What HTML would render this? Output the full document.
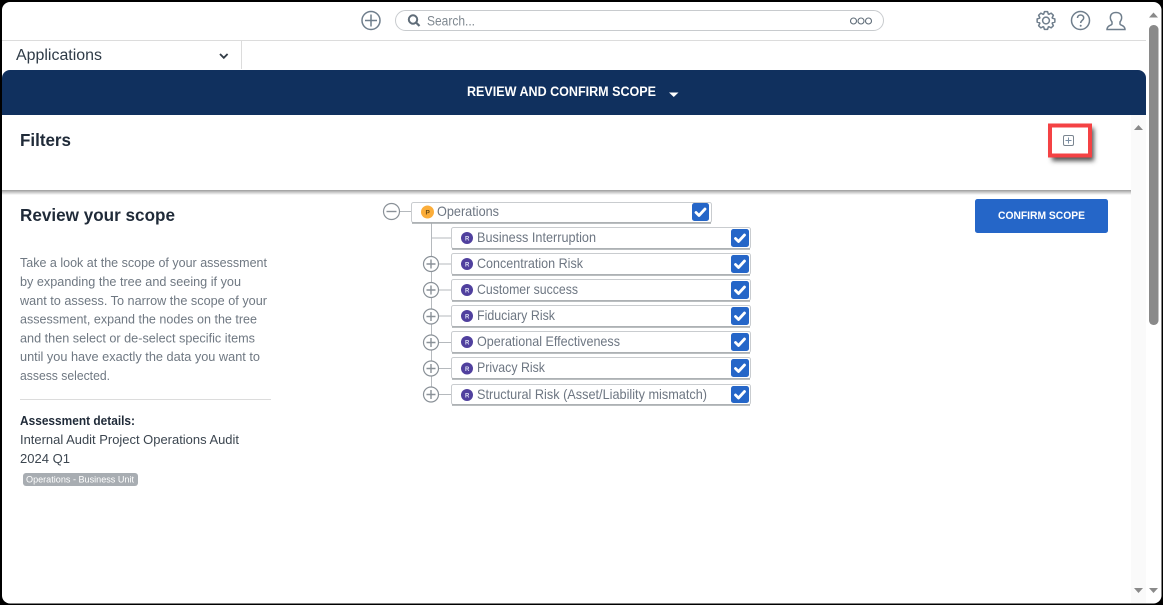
<!DOCTYPE html>
<html lang="en">
<head>
<meta charset="utf-8">
<title>Review and Confirm Scope</title>
<style>
html,body{margin:0;padding:0;background:#000;width:1163px;height:605px;overflow:hidden}
svg{display:block}
text{font-family:"Liberation Sans",sans-serif}
.p{font-size:12.5px;fill:#6f7882}
.n{font-size:14px;fill:#6d7682}
.d{font-size:12.5px;fill:#3c4650}
.ck{fill:none;stroke:#fff;stroke-width:2.8;stroke-linecap:round;stroke-linejoin:round}
.l{stroke:#b5b9bd;stroke-width:1;fill:none}
.c{fill:#fff;stroke:#8a9198;stroke-width:1.2}
.pm{stroke:#8a9198;stroke-width:1.4;fill:none}
.ic{fill:none;stroke:#6f7e8c;stroke-width:1.5}
</style>
</head>
<body>
<svg width="1163" height="605" viewBox="0 0 1163 605" xmlns="http://www.w3.org/2000/svg">
<defs>
<linearGradient id="sh" x1="0" y1="0" x2="0" y2="1"><stop offset="0" stop-color="#9c9c9c"/><stop offset="1" stop-color="#fff"/></linearGradient>
<filter id="rs" x="-30%" y="-30%" width="170%" height="170%"><feGaussianBlur stdDeviation="2.5"/></filter>
</defs>
<rect width="1163" height="605" fill="#000"/>
<rect x="2" y="2" width="1159.5" height="601.5" rx="8" fill="#fff"/>

<!-- scrollbars -->
<rect x="1131" y="115" width="15" height="488" fill="#fafafa"/>
<path d="M1149 17.5l4.5-5 4.5 5z" fill="#8a8a8a"/>
<rect x="1149" y="25" width="9.5" height="300" rx="4.5" fill="#8a8a8a"/>
<path d="M1134 130l4.5-5 4.5 5z" fill="#8a8a8a"/>
<path d="M1134 588h9l-4.5 5z" fill="#8a8a8a"/>
<path d="M1149 588h9l-4.5 5z" fill="#8a8a8a"/>

<!-- top bar -->
<rect x="2" y="40" width="1144" height="1" fill="#dcdcdc"/>
<rect x="241" y="41" width="1" height="28" fill="#dcdcdc"/>
<circle cx="371" cy="20.5" r="9" class="ic"/>
<path d="M371 14.5v12M365 20.5h12" class="ic"/>
<rect x="395.5" y="10.5" width="488" height="20" rx="10" fill="#fff" stroke="#c8cbce"/>
<circle cx="413" cy="19.5" r="4.2" fill="none" stroke="#5f6c78" stroke-width="2"/>
<path d="M416 22.5l3.5 3.5" stroke="#5f6c78" stroke-width="2.2" fill="none"/>
<text x="427" y="25.5" font-size="13.5" fill="#7f8890" textLength="48" lengthAdjust="spacingAndGlyphs">Search...</text>
<circle cx="853.5" cy="21" r="3" fill="none" stroke="#5f6c78" stroke-width="1.1"/>
<circle cx="861" cy="21" r="3" fill="none" stroke="#5f6c78" stroke-width="1.1"/>
<circle cx="868.5" cy="21" r="3" fill="none" stroke="#5f6c78" stroke-width="1.1"/>
<g transform="translate(1046 20.5)">
<polygon class="ic" stroke-linejoin="round" points="-2.33,-6.39 -1.56,-8.86 1.56,-8.86 2.33,-6.39 2.87,-6.17 5.16,-7.37 7.37,-5.16 6.17,-2.87 6.39,-2.33 8.86,-1.56 8.86,1.56 6.39,2.33 6.17,2.87 7.37,5.16 5.16,7.37 2.87,6.17 2.33,6.39 1.56,8.86 -1.56,8.86 -2.33,6.39 -2.87,6.17 -5.16,7.37 -7.37,5.16 -6.17,2.87 -6.39,2.33 -8.86,1.56 -8.86,-1.56 -6.39,-2.33 -6.17,-2.87 -7.37,-5.16 -5.16,-7.37 -2.87,-6.17"/>
<circle r="3.4" class="ic"/>
</g>
<circle cx="1080.5" cy="20.5" r="9" class="ic"/>
<path d="M1077.5 18c0-4 6.2-4 6.2 0 0 2.3-3 2.3-3 5" class="ic"/>
<circle cx="1080.7" cy="25.8" r="1" fill="#6f7e8c"/>
<path d="M1112 22C1109 18 1110 12.5 1116 12.5S1123 18 1120 22L1120 24C1120 25.5 1125 25 1125 29.5L1107 29.5C1107 25 1112 25.5 1112 24Z" class="ic"/>

<!-- applications -->
<text x="16" y="60" font-size="15.5" fill="#2f3b47" textLength="86" lengthAdjust="spacingAndGlyphs">Applications</text>
<path d="M220 54l3.8 3.8 3.8-3.8" fill="none" stroke="#333d47" stroke-width="1.8"/>

<!-- navy header -->
<path d="M2 115V78a8 8 0 0 1 8-8H1138a8 8 0 0 1 8 8V115z" fill="#10305e"/>
<text x="467" y="96" font-size="13.500" font-weight="bold" fill="#fff" textLength="189" lengthAdjust="spacingAndGlyphs">REVIEW AND CONFIRM SCOPE</text>
<path d="M669 92.500h9.500l-4.750 4.500z" fill="#fff"/>

<!-- filters -->
<text x="20" y="146" font-size="17.500" font-weight="bold" fill="#1f2a38" textLength="51" lengthAdjust="spacingAndGlyphs">Filters</text>
<rect x="2" y="190" width="1129" height="5" fill="url(#sh)"/>

<!-- red highlight -->
<rect x="1052" y="128" width="42" height="33" fill="#555" filter="url(#rs)"/>
<rect x="1050" y="125.500" width="40" height="30" fill="#fff" stroke="#f44244" stroke-width="4"/>
<rect x="1063.500" y="135.500" width="10" height="10" rx="1.500" fill="#fff" stroke="#7a8590"/>
<path d="M1068.500 137.500v6M1065.500 140.500h6" stroke="#7a8ea4" stroke-width="1"/>

<!-- left column -->
<text x="20" y="221" font-size="17.500" font-weight="bold" fill="#1f2a38" textLength="155" lengthAdjust="spacingAndGlyphs">Review your scope</text>
<text class="p" x="20" y="267" textLength="247" lengthAdjust="spacingAndGlyphs">Take a look at the scope of your assessment</text>
<text class="p" x="20" y="286" textLength="221" lengthAdjust="spacingAndGlyphs">by expanding the tree and seeing if you</text>
<text class="p" x="20" y="305" textLength="247" lengthAdjust="spacingAndGlyphs">want to assess. To narrow the scope of your</text>
<text class="p" x="20" y="323.500" textLength="237" lengthAdjust="spacingAndGlyphs">assessment, expand the nodes on the tree</text>
<text class="p" x="20" y="342.500" textLength="235" lengthAdjust="spacingAndGlyphs">and then select or de-select specific items</text>
<text class="p" x="20" y="361" textLength="240" lengthAdjust="spacingAndGlyphs">until you have exactly the data you want to</text>
<text class="p" x="20" y="380" textLength="90" lengthAdjust="spacingAndGlyphs">assess selected.</text>
<rect x="20" y="399" width="251" height="1" fill="#dcdcdc"/>
<text x="20" y="425" font-size="12.500" font-weight="bold" fill="#1f2a38" textLength="115" lengthAdjust="spacingAndGlyphs">Assessment details:</text>
<text class="d" x="20" y="444" textLength="219" lengthAdjust="spacingAndGlyphs">Internal Audit Project Operations Audit</text>
<text class="d" x="20" y="463" textLength="50" lengthAdjust="spacingAndGlyphs">2024 Q1</text>
<rect x="23" y="473" width="115" height="13" rx="3" fill="#a8adb2"/>
<text x="26" y="482.500" font-size="9" fill="#fff" textLength="108" lengthAdjust="spacingAndGlyphs">Operations - Business Unit</text>

<!-- connector lines -->
<path class="l" d="M399 211.500h13M431.500 223v171M431.500 238h21M431.500 264h21M431.500 290h21M431.500 316h21M431.500 342.500h21M431.500 368.500h21M431.500 394.500h21"/>

<!-- root node -->
<circle cx="391.500" cy="211.500" r="8" class="c"/>
<path class="pm" d="M386.500 211.500h10"/>
<rect x="411.500" y="202.500" width="300" height="20" rx="2" fill="#fff" stroke="#c9cccf"/>
<path d="M412 223h299" stroke="#a4a8ac" stroke-width="1.500"/>
<circle cx="427.500" cy="212" r="6.500" fill="#fbad3a"/>
<text x="425.500" y="214.500" font-size="6.500" font-weight="bold" fill="#6b4a10">P</text>
<text class="n" x="437" y="216" textLength="62" lengthAdjust="spacingAndGlyphs">Operations</text>
<rect x="692" y="203" width="17" height="18" rx="2.500" fill="#2566c8"/>
<path class="ck" d="M696 212.500l3 3 6-6.500"/>

<!-- row 1 -->
<rect x="451.500" y="227.500" width="299" height="21" rx="2" fill="#fff" stroke="#c9cccf"/>
<path d="M452 249h298" stroke="#a4a8ac" stroke-width="1.500"/>
<circle cx="467" cy="238" r="6" fill="#50409e"/>
<text x="465" y="240.300" font-size="6" font-weight="bold" fill="#dfe3f5">R</text>
<text class="n" x="477" y="242" textLength="119" lengthAdjust="spacingAndGlyphs">Business Interruption</text>
<rect x="731" y="229" width="18" height="18" rx="2.500" fill="#2566c8"/>
<path class="ck" d="M735.500 238.500l3 3 6-6.500"/>

<!-- row 2 -->
<circle cx="431" cy="264" r="7.500" class="c"/>
<path class="pm" d="M431 259.500v9M426.500 264h9"/>
<rect x="451.500" y="253.500" width="299" height="21" rx="2" fill="#fff" stroke="#c9cccf"/>
<path d="M452 275h298" stroke="#a4a8ac" stroke-width="1.500"/>
<circle cx="467" cy="264" r="6" fill="#50409e"/>
<text x="465" y="266.300" font-size="6" font-weight="bold" fill="#dfe3f5">R</text>
<text class="n" x="477" y="268" textLength="106" lengthAdjust="spacingAndGlyphs">Concentration Risk</text>
<rect x="731" y="255" width="18" height="18" rx="2.500" fill="#2566c8"/>
<path class="ck" d="M735.500 264.500l3 3 6-6.500"/>

<!-- row 3 -->
<circle cx="431" cy="290" r="7.500" class="c"/>
<path class="pm" d="M431 285.500v9M426.500 290h9"/>
<rect x="451.500" y="279.500" width="299" height="21" rx="2" fill="#fff" stroke="#c9cccf"/>
<path d="M452 301h298" stroke="#a4a8ac" stroke-width="1.500"/>
<circle cx="467" cy="290" r="6" fill="#50409e"/>
<text x="465" y="292.300" font-size="6" font-weight="bold" fill="#dfe3f5">R</text>
<text class="n" x="477" y="294" textLength="101" lengthAdjust="spacingAndGlyphs">Customer success</text>
<rect x="731" y="281" width="18" height="18" rx="2.500" fill="#2566c8"/>
<path class="ck" d="M735.500 290.500l3 3 6-6.500"/>

<!-- row 4 -->
<circle cx="431" cy="316.500" r="7.500" class="c"/>
<path class="pm" d="M431 312v9M426.500 316.500h9"/>
<rect x="451.500" y="305.500" width="299" height="21" rx="2" fill="#fff" stroke="#c9cccf"/>
<path d="M452 327h298" stroke="#a4a8ac" stroke-width="1.500"/>
<circle cx="467" cy="316" r="6" fill="#50409e"/>
<text x="465" y="318.300" font-size="6" font-weight="bold" fill="#dfe3f5">R</text>
<text class="n" x="477" y="320" textLength="78" lengthAdjust="spacingAndGlyphs">Fiduciary Risk</text>
<rect x="731" y="307" width="18" height="18" rx="2.500" fill="#2566c8"/>
<path class="ck" d="M735.500 316.500l3 3 6-6.500"/>

<!-- row 5 -->
<circle cx="431" cy="342.500" r="7.500" class="c"/>
<path class="pm" d="M431 338v9M426.500 342.500h9"/>
<rect x="451.500" y="331.500" width="299" height="21" rx="2" fill="#fff" stroke="#c9cccf"/>
<path d="M452 353h298" stroke="#a4a8ac" stroke-width="1.500"/>
<circle cx="467" cy="342" r="6" fill="#50409e"/>
<text x="465" y="344.300" font-size="6" font-weight="bold" fill="#dfe3f5">R</text>
<text class="n" x="477" y="346" textLength="143" lengthAdjust="spacingAndGlyphs">Operational Effectiveness</text>
<rect x="731" y="333" width="18" height="18" rx="2.500" fill="#2566c8"/>
<path class="ck" d="M735.500 342.500l3 3 6-6.500"/>

<!-- row 6 -->
<circle cx="431" cy="368.500" r="7.500" class="c"/>
<path class="pm" d="M431 364v9M426.500 368.500h9"/>
<rect x="451.500" y="357.500" width="299" height="21" rx="2" fill="#fff" stroke="#c9cccf"/>
<path d="M452 379h298" stroke="#a4a8ac" stroke-width="1.500"/>
<circle cx="467" cy="368.500" r="6" fill="#50409e"/>
<text x="465" y="370.800" font-size="6" font-weight="bold" fill="#dfe3f5">R</text>
<text class="n" x="477" y="372" textLength="68" lengthAdjust="spacingAndGlyphs">Privacy Risk</text>
<rect x="731" y="359" width="18" height="18" rx="2.500" fill="#2566c8"/>
<path class="ck" d="M735.500 368.500l3 3 6-6.500"/>

<!-- row 7 -->
<circle cx="431" cy="394.500" r="7.500" class="c"/>
<path class="pm" d="M431 390v9M426.500 394.500h9"/>
<rect x="451.500" y="384.500" width="299" height="20" rx="2" fill="#fff" stroke="#c9cccf"/>
<path d="M452 405h298" stroke="#a4a8ac" stroke-width="1.500"/>
<circle cx="467" cy="395" r="6" fill="#50409e"/>
<text x="465" y="397.300" font-size="6" font-weight="bold" fill="#dfe3f5">R</text>
<text class="n" x="477" y="399" textLength="230" lengthAdjust="spacingAndGlyphs">Structural Risk (Asset/Liability mismatch)</text>
<rect x="731" y="386" width="18" height="17" rx="2.500" fill="#2566c8"/>
<path class="ck" d="M735.500 395l3 3 6-6.500"/>

<!-- button -->
<rect x="975" y="199" width="133" height="34" rx="2.500" fill="#2566c8"/>
<text x="998" y="219" font-size="11" font-weight="bold" fill="#fff" textLength="87" lengthAdjust="spacingAndGlyphs">CONFIRM SCOPE</text>
</svg>
</body>
</html>
